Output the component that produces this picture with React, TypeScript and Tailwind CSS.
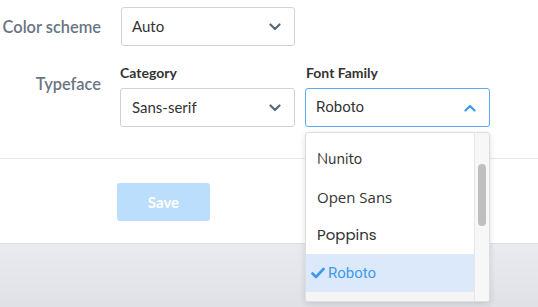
import React from "react";

const Chevron = ({ up = false, color }: { up?: boolean; color: string }) => (
  <svg width="12" height="8" viewBox="0 0 12 8" className="shrink-0">
    <path
      d={up ? "M1.5 6.5 L6 2 L10.5 6.5" : "M1.5 1.5 L6 6 L10.5 1.5"}
      fill="none"
      stroke={color}
      strokeWidth="2.2"
      strokeLinecap="round"
      strokeLinejoin="round"
    />
  </svg>
);

export default function App() {
  const font = { fontFamily: "Lato, 'Noto Sans', sans-serif" };
  return (
    <div className="relative w-[538px] h-[307px] bg-white overflow-hidden" style={font}>
      <div className="h-[159px] border-b border-[#e8e8ea] pt-[7px]">
        <div className="flex items-start">
          <div className="w-[102px] text-right pr-[1px] text-[16.4px] font-semibold text-[#6a7584] leading-[39px]">
            Color scheme
          </div>
          <div className="ml-[19px] w-[174px] h-[39px] border border-[#cfd3d8] rounded-[3px] flex items-center justify-between pl-[10px] pr-[13px] text-[15px] text-[#333]">
            <span>Auto</span>
            <Chevron color="#5b6877" />
          </div>
        </div>
        <div className="flex items-start mt-[17px]">
          <div className="w-[102px] text-right pr-[1px] text-[16.4px] font-semibold text-[#6a7584] leading-[20px] mt-[11px]">
            Typeface
          </div>
          <div className="ml-[18px] w-[175px]">
            <div className="text-[14px] font-bold text-[#333] leading-[18px] mt-[1px]">Category</div>
            <div className="mt-[6px] w-[175px] h-[39px] border border-[#cfd3d8] rounded-[3px] flex items-center justify-between pl-[11px] pr-[13px] text-[15px] text-[#333]">
              <span>Sans-serif</span>
              <Chevron color="#5b6877" />
            </div>
          </div>
          <div className="ml-[10px] w-[185px]">
            <div className="text-[14px] font-bold text-[#333] leading-[18px] pl-[1px] mt-[1px]">Font Family</div>
            <div className="mt-[6px] w-[185px] h-[39px] border border-[#5aa8ef] rounded-[3px] flex items-center justify-between pl-[10px] pr-[13px] text-[15px] text-[#333]">
              <span style={{ fontFamily: "Roboto, sans-serif" }}>Roboto</span>
              <Chevron up color="#3d9af0" />
            </div>
          </div>
        </div>
      </div>
      <div className="h-[84px] pt-[24px] pl-[117px]">
        <div className="w-[93px] h-[38px] rounded-[3px] bg-[#bbdefc] text-white text-[15px] font-bold flex items-center justify-center">
          Save
        </div>
      </div>
      <div className="h-[64px] border-t border-[#dcdee4] bg-gradient-to-b from-[#e9ebf0] to-[#dfe1e6]" />

      <div className="absolute left-[305px] top-[132px] w-[185px] h-[170px] bg-white border border-[#dddddd] rounded-[3px] shadow-[0_2px_6px_rgba(0,0,0,0.12)] overflow-hidden flex">
        <div className="flex-1 flex flex-col text-[15px] text-[#333]">
          <div className="h-[7px]" />
          <div className="h-[38px] flex items-center pl-[11px]" style={{ fontFamily: "Nunito, 'Noto Sans', sans-serif" }}>Nunito</div>
          <div className="h-[38px] flex items-center pl-[11px]" style={{ fontFamily: "'Open Sans', sans-serif" }}>Open Sans</div>
          <div className="h-[38px] flex items-center pl-[11px]" style={{ fontFamily: "Poppins, 'Noto Sans', sans-serif" }}>Poppins</div>
          <div className="h-[38px] flex items-center pl-[5px] bg-[#dce9fa] text-[#3d9af0]" style={{ fontFamily: "Roboto, sans-serif" }}>
            <svg width="14" height="12" viewBox="0 0 14 12" className="mr-[3px]">
              <path d="M1.5 6.5 L5 10 L12.5 2" fill="none" stroke="#3d9af0" strokeWidth="2.6" strokeLinecap="round" strokeLinejoin="round" />
            </svg>
            Roboto
          </div>
          <div className="flex-1 bg-[#f5f5f5]" />
        </div>
        <div className="w-[15px] bg-[#f7f7f7] border-l border-[#e6e6e6] relative">
          <div className="absolute left-[3px] top-[31px] w-[8px] h-[62px] rounded-full bg-[#bfbfbf]" />
        </div>
      </div>
    </div>
  );
}
